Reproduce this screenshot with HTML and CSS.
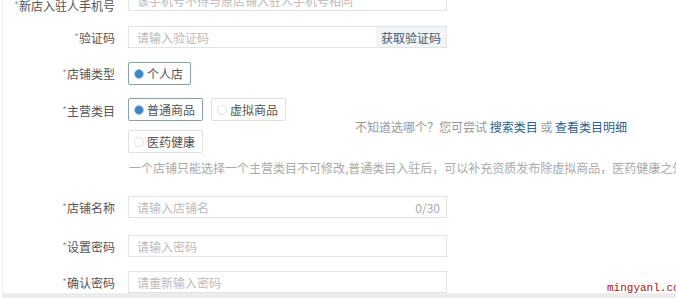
FILE: index.html
```html
<!DOCTYPE html>
<html>
<head>
<meta charset="utf-8">
<link rel="stylesheet" href="styles.css">
</head>
<body>
<div class="page">
  <div class="form">

    <div class="row r-phone">
      <label class="lbl"><i>*</i>新店入驻人手机号</label>
      <div class="ipt"><span class="ph">该手机号不得与原店铺入驻人手机号相同</span></div>
    </div>

    <div class="row r-code">
      <label class="lbl"><i>*</i>验证码</label>
      <div class="ipt"><span class="ph">请输入验证码</span><span class="getcode">获取验证码</span></div>
    </div>

    <div class="row r-type">
      <label class="lbl"><i>*</i>店铺类型</label>
      <div class="opt on"><span class="dot"></span>个人店</div>
    </div>

    <div class="row r-cat">
      <label class="lbl"><i>*</i>主营类目</label>
      <div class="opts">
        <div class="opt on"><span class="dot"></span>普通商品</div>
        <div class="opt"><span class="dot"></span>虚拟商品</div>
        <div class="opt"><span class="dot"></span>医药健康</div>
      </div>
      <div class="hint">不知道选哪个？您可尝试 <a>搜索类目</a> 或 <a>查看类目明细</a></div>
    </div>

    <div class="note">一个店铺只能选择一个主营类目不可修改,普通类目入驻后，可以补充资质发布除虚拟商品，医药健康之外的商品</div>

    <div class="row r-name">
      <label class="lbl"><i>*</i>店铺名称</label>
      <div class="ipt"><span class="ph">请输入店铺名</span><span class="count">0/30</span></div>
    </div>

    <div class="row r-pwd">
      <label class="lbl"><i>*</i>设置密码</label>
      <div class="ipt"><span class="ph">请输入密码</span></div>
    </div>

    <div class="row r-pwd2">
      <label class="lbl"><i>*</i>确认密码</label>
      <div class="ipt"><span class="ph">请重新输入密码</span></div>
    </div>

  </div>
  <div class="wm">mingyanl.com</div>
</div>
</body>
</html>
```

FILE: styles.css
```css
body { margin: 0; background: #fff; overflow: hidden;
font: 12px "Noto Sans CJK SC", "Liberation Sans", sans-serif; color: #333; }

.page { position: relative; width: 676px; height: 298px; overflow: hidden; }

.form { margin: -11px 0 0 2px; border-left: 1px solid #ececec; border-bottom: 5px solid #ececec;
height: 309px; box-sizing: border-box; }

.row { display: flex; align-items: center; }

.lbl { width: 112px; text-align: right; margin-right: 13px; color: #555; white-space: nowrap; flex: none; }
.lbl i { font-style: normal; color: #999; font-size: 10px; vertical-align: top; }
.r-phone .lbl { position: relative; top: 5px; }

.ipt { width: 319px; height: 22px; box-sizing: border-box; border: 1px solid #e3e3e3;
display: flex; align-items: center; justify-content: space-between; padding-left: 8px; flex: none; }

.ph { color: #bbb; white-space: nowrap; }
.count { color: #aaa; padding-right: 6px; }

.getcode { background: #f2f4f6; color: #3c5a78; height: 100%; display: flex; align-items: center;
padding: 0 5px; }

.r-code { margin-top: 15px; }
.r-type { margin-top: 14px; }
.r-cat { margin-top: 13px; align-items: flex-start; }
.r-name { margin-top: 20px; }
.r-pwd { margin-top: 17px; }
.r-pwd2 { margin-top: 14px; }
.r-cat .lbl { margin-top: 4px; }

.opts { display: flex; flex-wrap: wrap; width: 170px; gap: 9px 8px; flex: none; }

.opt { height: 23px; box-sizing: border-box; border: 1px solid #e0e0e0; border-radius: 2px;
display: flex; align-items: center; padding: 0 7px 0 5px; color: #555; white-space: nowrap; }
.opt.on { border-color: #8aa0ad; box-shadow: 0 0 1px #c8d4dc; }

.dot { width: 8px; height: 8px; border-radius: 50%; border: 1px solid #e2e2e2; margin-right: 3px; }
.opt.on .dot { background: #3e86c0; border-color: #a7c6de; }

.hint { margin: 20px 0 0 57px; color: #999; white-space: nowrap; }
.hint a { color: #2d5f8e; }

.note { margin: 6px 0 0 126px; color: #aaa; white-space: nowrap; }

.wm { position: absolute; left: 607px; top: 282px; color: #b01010;
font: 11px "Liberation Mono", monospace; }
```
